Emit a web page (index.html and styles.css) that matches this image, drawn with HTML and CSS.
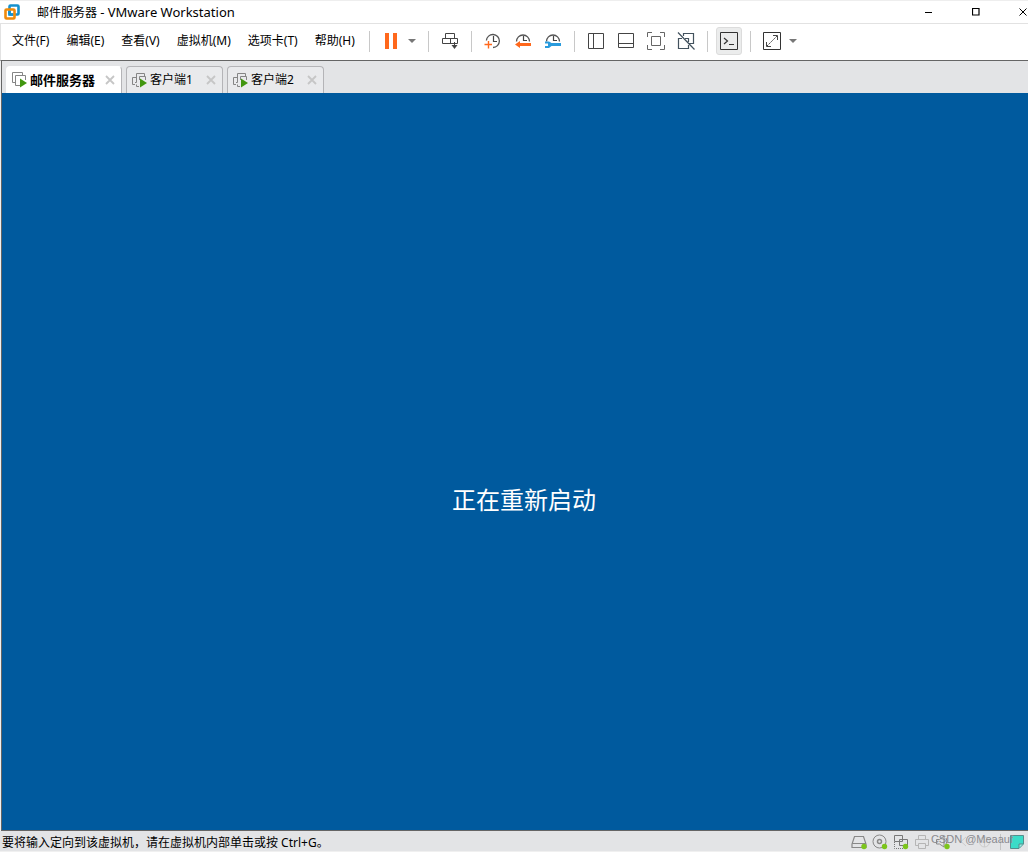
FILE: index.html
```html
<!DOCTYPE html>
<html lang="zh-CN">
<head>
<meta charset="utf-8">
<title>邮件服务器 - VMware Workstation</title>
<link rel="stylesheet" href="styles.css">
</head>
<body>
<svg class="defs" aria-hidden="true">
  <symbol id="vm-front" viewBox="0 0 16 16"><path d="M3 10.500H.5V.5H10.500V3" fill="none" stroke="#858585"/><path d="M8 13.500H3.500V3.500H13.500V8" fill="none" stroke="#858585"/><path d="M8 6.500 15 11 8 15.500Z" fill="#41960f"/></symbol>
  <symbol id="vm-back" viewBox="0 0 16 16"><path d="M3 12.500H.5V5.500H4M4.500 10.500V1.500H12.500V4M3 10.500H4.500M7 14.500H4.500M7.500 8V4.500H13.500V8M4.500 12.500V14.500" fill="none" stroke="#858585"/><path d="M8 6.500 15 11 8 15.500Z" fill="#41960f"/></symbol>
  <symbol id="close" viewBox="0 0 10 10"><path d="M1 1 9 9M9 1 1 9" fill="none" stroke="#c6c6c6" stroke-width="1.800"/></symbol>
  <symbol id="clock" viewBox="0 0 18 18"><path d="M2.400 8.500A6.500 6.500 0 1 1 9 15.500" fill="none" stroke="#555" stroke-width="1.300"/><path d="M9.500 4V9.500H13" fill="none" stroke="#444" stroke-width="1.200"/></symbol>
  <symbol id="clock-half" viewBox="0 0 18 18"><path d="M2.500 9.500A6.500 6.500 0 1 1 15.500 9.500" fill="none" stroke="#555" stroke-width="1.300"/><path d="M9.500 4V8.500H13" fill="none" stroke="#444" stroke-width="1.200"/></symbol>
  <symbol id="caret" viewBox="0 0 8 4"><path d="M0 0H8L4 4Z" fill="#777"/></symbol>
</svg>
<header class="titlebar">
  <svg class="logo" viewBox="0 0 16 16"><rect x="5.500" y="1.500" width="9" height="9" rx="1" fill="none" stroke="#1591ce" stroke-width="2.600"/><rect x="1.500" y="5.500" width="9" height="9" rx="1" fill="none" stroke="#f08a0a" stroke-width="2.600"/><path d="M5.500 7V10.500H9" fill="none" stroke="#1591ce" stroke-width="2.600"/></svg>
  <h1 class="title">邮件服务器 <span class="product">- VMware Workstation</span></h1>
  <div class="window-controls">
    <button class="window-button" aria-label="最小化"><svg viewBox="0 0 8 8"><path d="M0 4.500H7" stroke="#000"/></svg></button>
    <button class="window-button" aria-label="最大化"><svg viewBox="0 0 8 8"><path d="M.5.5H7V7H.5Z" fill="none" stroke="#000" stroke-width="1.200"/></svg></button>
    <button class="window-button" aria-label="关闭"><svg viewBox="0 0 8 8"><path d="M.5.5 7.500 7.500M7.500.5.5 7.500" stroke="#000"/></svg></button>
  </div>
</header>
<div class="commandbar">
  <nav class="menu">
    <button class="menu-item">文件(F)</button>
    <button class="menu-item">编辑(E)</button>
    <button class="menu-item">查看(V)</button>
    <button class="menu-item">虚拟机(M)</button>
    <button class="menu-item">选项卡(T)</button>
    <button class="menu-item">帮助(H)</button>
  </nav>
  <div class="toolbar">
    <span class="separator"></span>
    <button class="tool" aria-label="挂起"><svg viewBox="0 0 18 18"><path d="M3 1H7V17H3ZM11 1H15V17H11Z" fill="#ff681c"/></svg></button>
    <button class="caret caret-power" aria-label="电源选项"><svg><use href="#caret"/></svg></button>
    <span class="separator"></span>
    <button class="tool" aria-label="发送 Ctrl+Alt+Del"><svg viewBox="0 0 18 18"><path d="M4.500 6.500V1.500H13.500V6.500M1.500 6.500H16.500V11.500H1.500ZM9.500 6.500V11.500M13.500 10V16" fill="none" stroke="#444"/><path d="M10.500 13H16.500L13.500 17Z" fill="#444"/></svg></button>
    <span class="separator"></span>
    <button class="tool" aria-label="拍摄快照"><svg viewBox="0 0 18 18"><use href="#clock"/><path d="M.5 12.500H8M4.500 9V16.500" stroke="#ff681c" stroke-width="1.400"/></svg></button>
    <button class="tool" aria-label="恢复快照"><svg viewBox="0 0 18 18"><use href="#clock-half"/><path d="M1 12.500 6 9V11H17V14H6V16Z" fill="#ff681c"/></svg></button>
    <button class="tool" aria-label="管理快照"><svg viewBox="0 0 18 18"><use href="#clock-half"/><path d="M1 9.500H5L7.500 11H17V14H7.500L5 16H1V14H4V11.500H1Z" fill="#299bdd"/></svg></button>
    <span class="separator"></span>
    <button class="tool" aria-label="显示库"><svg viewBox="0 0 18 18"><path d="M1.500 1.500H16.500V16.500H1.500ZM6.500 1.500V16.500" fill="none" stroke="#444"/></svg></button>
    <button class="tool" aria-label="显示缩略图栏"><svg viewBox="0 0 18 18"><path d="M1.500 1.500H16.500V15.500H1.500ZM1.500 11.500H16.500" fill="none" stroke="#444"/></svg></button>
    <button class="tool" aria-label="全屏"><svg viewBox="0 0 18 18"><path d="M.5 5V.5H5M13 .5H17.500V5M17.500 13V17.500H13M5 17.500H.5V13M4.500 4.500H13.500V13.500H4.500Z" fill="none" stroke="#666"/></svg></button>
    <button class="tool" aria-label="Unity"><svg viewBox="0 0 18 18"><path d="M6.500 4V1.500H16.500V11.500H12M5 6.500H1.500V16.500H11.500V13M8 6.500H11.500V10M1 .5 17.500 17.500" fill="none" stroke="#43525e" stroke-width="1.200"/></svg></button>
    <span class="separator"></span>
    <button class="tool tool-pressed" aria-label="控制台视图"><svg viewBox="0 0 18 18"><path d="M.5.5H17.500V17.500H.5Z" fill="none" stroke="#333"/><path d="M4 6 7.500 9 4 12M9 12.500H14" fill="none" stroke="#333" stroke-width="1.200"/></svg></button>
    <span class="separator"></span>
    <button class="tool" aria-label="自由拉伸"><svg viewBox="0 0 18 18"><path d="M.5.5H17.500V17.500H.5Z" fill="none" stroke="#333"/><path d="M10 3.500H14.500V8M3.500 10V14.500H8" fill="none" stroke="#444"/><path d="M4 14 14 4" stroke="#444" stroke-dasharray="2 1"/></svg></button>
    <button class="caret" aria-label="拉伸选项"><svg><use href="#caret"/></svg></button>
  </div>
</div>
<nav class="tabs">
  <div class="tab tab-active"><button class="tab-label"><svg class="tab-icon"><use href="#vm-front"/></svg>邮件服务器</button><button class="tab-close" aria-label="关闭选项卡"><svg><use href="#close"/></svg></button></div>
  <div class="tab"><button class="tab-label"><svg class="tab-icon"><use href="#vm-back"/></svg>客户端1</button><button class="tab-close" aria-label="关闭选项卡"><svg><use href="#close"/></svg></button></div>
  <div class="tab"><button class="tab-label"><svg class="tab-icon"><use href="#vm-back"/></svg>客户端2</button><button class="tab-close" aria-label="关闭选项卡"><svg><use href="#close"/></svg></button></div>
</nav>
<main class="screen"><p class="restart">正在重新启动</p></main>
<footer class="statusbar">
  <p class="hint">要将输入定向到该虚拟机，请在虚拟机内部单击或按 Ctrl+G。</p>
  <div class="devices">
    <svg viewBox="0 0 16 16"><path d="M3.500 2.500H12.500L15 10V13.500H1V10ZM1 9.500H15" fill="none" stroke="#888" stroke-width="1.200"/><circle cx="13" cy="12.500" r="2.700" fill="#7cc51c"/></svg>
    <svg viewBox="0 0 16 16"><circle cx="7.500" cy="7.500" r="6.500" fill="none" stroke="#888"/><circle cx="7.500" cy="7.500" r="2" fill="none" stroke="#888" stroke-width="1.500"/><circle cx="12.500" cy="12.500" r="2.700" fill="#7cc51c"/></svg>
    <svg viewBox="0 0 16 16"><path d="M1.500 1.500H9.500V7.500H1.500ZM6.500 5.500H14.500V11.500H6.500Z" fill="#e3e4e6" stroke="#777"/><path d="M1.500 8V14.500H10" fill="none" stroke="#777" stroke-dasharray="1 1"/><circle cx="12.500" cy="12.500" r="2.700" fill="#7cc51c"/></svg>
    <svg viewBox="0 0 16 16"><path d="M4.500 5.500V1.500H11.500V5.500M4 11.500H1.500V5.500H14.500V11.500H12M4.500 9.500H11.500V14.500H4.500Z" fill="none" stroke="#b5b5b5"/></svg>
    <svg viewBox="0 0 16 16"><path d="M1.500 5.500H4.500L9 2V13L4.500 10H1.500ZM11 4Q13 7 11 10" fill="none" stroke="#888"/><circle cx="12" cy="12.500" r="2.700" fill="#7cc51c"/></svg>
    <svg viewBox="0 0 16 16"><path d="M10 3 5 7.500 10 12" fill="none" stroke="#ccc"/></svg>
    <svg viewBox="0 0 16 16"><circle cx="7.500" cy="8" r="5" fill="none" stroke="#ccc"/><path d="M7.500 3V13M5 8H10" stroke="#ccc"/></svg>
  </div>
  <span class="status-separator"></span>
  <svg class="note" viewBox="0 0 16 16"><path d="M1.500 1.500H14.500V10L10 14.500H1.500Z" fill="#3bdcc8" stroke="#548e8d"/><path d="M10 14V10H14" fill="#9eeae0" stroke="#548e8d"/></svg>
  <span class="watermark">CSDN @Meaauf</span>
</footer>
</body>
</html>
```
FILE: styles.css
```css
* { box-sizing: border-box; }
body {
  margin: 0;
  min-height: 100vh;
  display: flex;
  flex-direction: column;
  font: 12px/16px "Noto Sans", "Noto Sans CJK SC", sans-serif;
  color: #000;
  background: #f0f0f0;
}
button {
  margin: 0;
  padding: 0;
  border: 0;
  background: none;
  font: inherit;
  color: inherit;
  white-space: nowrap;
}
svg { display: block; flex: none; }
p, h1 { margin: 0; }
.defs { position: absolute; width: 0; height: 0; }

.titlebar {
  display: flex;
  align-items: center;
  height: 24px;
  padding-left: 4px;
  border-top: 1px solid #eee;
  border-bottom: 1px solid #e2e2e2;
  background: #fff;
  overflow: hidden;
}
.logo { width: 16px; height: 16px; margin-right: 17px; }
.title { flex: 1; font-size: 12px; font-weight: 400; }
.product { font-size: 13px; }
.window-controls { display: flex; gap: 39px; margin-right: 1px; }
.window-button svg { width: 8px; height: 8px; }

.commandbar {
  display: flex;
  align-items: center;
  height: 37px;
  padding: 0 0 2px 11px;
  border-left: 1px solid #e2e2e2;
  border-bottom: 1px solid #656565;
  background: #fff;
}
.menu { display: flex; gap: 17px; margin-right: 8px; padding-bottom: 1px; }
.toolbar { display: flex; align-items: center; }
.separator { width: 1px; height: 21px; margin: 0 6px; background: #c8c8c8; }
.tool {
  display: flex;
  align-items: center;
  justify-content: center;
  width: 30px;
  height: 28px;
}
.tool svg { width: 18px; height: 18px; }
.tool-pressed {
  width: 26px;
  margin: 0 2px;
  border: 1px solid #dcdcdc;
  border-radius: 3px;
  background: #ebecec;
}
.caret { width: 12px; }
.caret svg { width: 8px; height: 4px; margin: 0 auto; }
.caret-power { margin-right: 4px; }

.tabs {
  display: flex;
  align-items: flex-end;
  gap: 4px;
  height: 32px;
  padding-left: 4px;
  border-left: 1px solid #656565;
  margin-left: 1px;
  background: #e3e4e6;
}
.tab {
  display: flex;
  align-items: center;
  justify-content: space-between;
  width: 97px;
  height: 27px;
  padding: 0 6px 0 5px;
  border: 1px solid #b4b4b7;
  border-bottom: 0;
  border-radius: 4px 4px 0 0;
  background: #e9eaec;
}
.tab-active {
  width: 116px;
  border-left-color: #fff;
  border-top-color: #fff;
  background: #fff;
  font-size: 13px;
  font-weight: 700;
}
.tab-label { display: flex; align-items: center; gap: 2px; }
.tab-icon { width: 16px; height: 16px; }
.tab-close svg { width: 10px; height: 10px; }

.screen {
  flex: 1;
  display: flex;
  align-items: center;
  justify-content: center;
  margin-left: 1px;
  padding-top: 76px;
  border-left: 1px solid #656565;
  border-bottom: 1px solid #656565;
  background: #005a9e;
}
.restart { font-size: 24px; line-height: 32px; color: #fff; margin-left: 18px; }

.statusbar {
  position: relative;
  display: flex;
  align-items: center;
  height: 21px;
  padding: 2px 3px 0 2px;
  border-bottom: 1px solid #f0f0f0;
  background: #e3e4e6;
}
.hint { flex: 1; padding-top: 2px; white-space: nowrap; }
.devices { display: flex; gap: 5px; }
.devices svg, .note { width: 16px; height: 16px; }
.status-separator { width: 1px; height: 16px; margin: 0 8px 0 7px; background: #c4c4c4; }
.watermark {
  position: absolute;
  right: 15px;
  top: 0;
  font-family: "Liberation Sans", sans-serif;
  font-size: 11px;
  color: #8a8a8f;
}
```
